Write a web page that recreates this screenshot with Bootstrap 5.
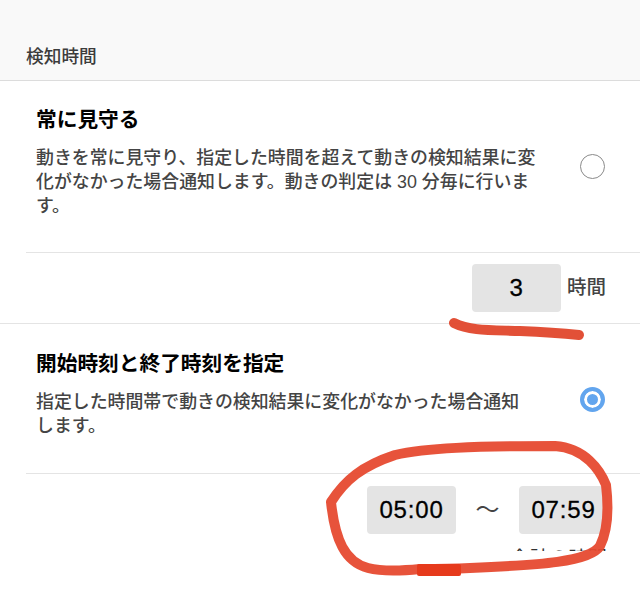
<!DOCTYPE html>
<html lang="ja">
<head>
<meta charset="utf-8">
<title>検知時間</title>
<link href="https://cdn.jsdelivr.net/npm/bootstrap@5.3.0/dist/css/bootstrap.min.css" rel="stylesheet">
<style>
html,body{height:606px;overflow:hidden;background:#fff;}
body{font-family:"Liberation Sans","Noto Sans CJK JP",sans-serif;color:#000;position:relative;}
.sec-head{height:81px;background:#f9f9f9;border-bottom:1px solid #dcdcdc;padding-left:26px;padding-bottom:9px;font-size:17.7px;font-weight:500;color:#3c3c3c;}
.opt{padding:0 36px;}
.opt-one{height:171px;padding-top:24px;}
.opt-two{height:149px;padding-top:25px;}
.opt-title{font-size:20.7px;font-weight:700;line-height:30px;}
.opt-one .opt-title{margin-bottom:11px;}
.opt-two .opt-title{margin-bottom:11px;}
.opt-desc{font-size:17.9px;line-height:24px;font-weight:500;color:#444;width:505px;}
.opt-two .opt-desc{width:498px;}
.radio-off,.radio-on{width:25px;height:25px;border-radius:50%;flex:none;margin-right:-1px;}
.radio-off{border:1.5px solid #8a8a8a;}
.radio-on{border:4px solid #62a5ee;background:#62a5ee;box-shadow:inset 0 0 0 3px #fff;}
.opt-one .radio-off{margin-top:49px;}
.opt-two .radio-on{margin-top:38px;}
.rule-in{height:1px;background:#e4e4e4;margin-left:26px;}
.rule-full{height:1px;background:#e4e4e4;}
.val-row{height:70px;padding-right:34px;}
.val-box{background:#e4e4e4;border-radius:4px;height:48px;width:89px;font-size:24px;letter-spacing:.8px;-webkit-text-stroke:.3px #000;color:#000;}
.unit{font-size:19.5px;font-weight:500;color:#444;margin-left:6px;}
.time-row{height:74px;padding-right:32px;padding-top:12px;}
.tilde{width:63px;height:48px;font-size:24px;color:#444;}
.cut-note{height:3px;overflow:hidden;font-size:19.4px;line-height:20px;color:#333;text-align:right;padding-right:33px;}
.ink{position:absolute;left:0;top:0;pointer-events:none;}
</style>
</head>
<body>
<div class="sec-head d-flex align-items-end">検知時間</div>
<div class="opt opt-one d-flex justify-content-between">
  <div>
    <div class="opt-title">常に見守る</div>
    <div class="opt-desc">動きを常に見守り、指定した時間を超えて動きの検知結果に変化がなかった場合通知します。動きの判定は 30 分毎に行います。</div>
  </div>
  <div class="radio-off"></div>
</div>
<div class="rule-in"></div>
<div class="val-row d-flex justify-content-end align-items-center">
  <div class="val-box d-flex align-items-center justify-content-center">3</div>
  <div class="unit">時間</div>
</div>
<div class="rule-full"></div>
<div class="opt opt-two d-flex justify-content-between">
  <div>
    <div class="opt-title">開始時刻と終了時刻を指定</div>
    <div class="opt-desc">指定した時間帯で動きの検知結果に変化がなかった場合通知します。</div>
  </div>
  <div class="radio-on"></div>
</div>
<div class="rule-in"></div>
<div class="time-row d-flex justify-content-end align-items-start">
  <div class="val-box d-flex align-items-center justify-content-center">05:00</div>
  <div class="tilde d-flex justify-content-center align-items-center">〜</div>
  <div class="val-box d-flex align-items-center justify-content-center">07:59</div>
</div>
<div class="cut-note">合計の時間</div>
<svg class="ink" width="640" height="606" viewBox="0 0 640 606" fill="none">
  <path d="M454 323 C470 331 490 330 520 331 C545 332 560 333 579 335" stroke="#e0472c" stroke-width="10" stroke-linecap="round" opacity=".95"/>
  <path d="M420 569 C400 571 380 571 368 568 C345 562 335 540 331 502 C345 480 362 466 395 455 C425 448 475 446 555 446 C585 448 600 470 606 485 C609 510 608 530 600 546 C590 562 540 565 470 568 C450 569 435 569 420 569" stroke="#e64a30" stroke-width="10" stroke-linecap="round" stroke-linejoin="round" opacity=".95"/>
  <rect x="417" y="564" width="44" height="12" rx="2" fill="#e63a1c"/>
</svg>
<script src="https://cdn.jsdelivr.net/npm/bootstrap@5.3.0/dist/js/bootstrap.bundle.min.js"></script>
</body>
</html>
